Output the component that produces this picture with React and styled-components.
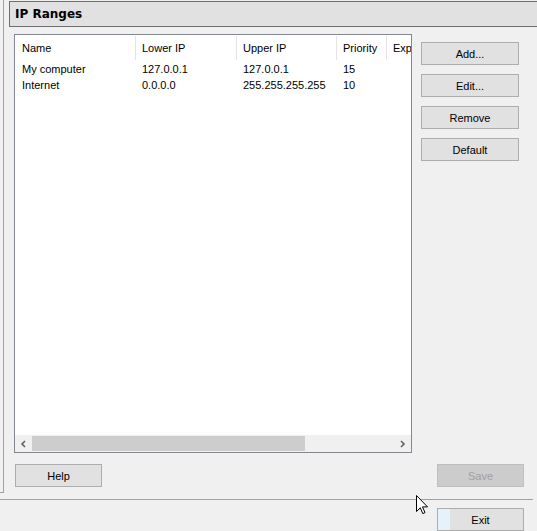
import styled, { createGlobalStyle } from "styled-components";

const GlobalStyle = createGlobalStyle`
  html, body {
    margin: 0;
    padding: 0;
    background: #f0f0f0;
  }
  body {
    font-family: "Liberation Sans", Arial, sans-serif;
    font-size: 11px;
    color: #000;
  }
`;

const Window = styled.div`
  position: relative;
  width: 537px;
  height: 531px;
  overflow: hidden;
  background: #f0f0f0;
  display: flex;
  flex-direction: column;
`;

const Main = styled.div`
  display: flex;
  height: 501px;
`;

const SidePanel = styled.div`
  flex: none;
  width: 3px;
  height: 492px;
  border-right: 1px solid #a0a0a0;
  border-bottom: 1px solid #a0a0a0;
`;

const Content = styled.div`
  flex: 1;
  padding: 1px 0 0 5px;
`;

const GroupHeader = styled.div`
  width: 522px;
  height: 24px;
  border: 1px solid #6e6e6e;
  background: #e1e1e1;
  padding-left: 5px;
  font-family: "DejaVu Sans", Verdana, sans-serif;
  font-weight: bold;
  font-size: 12px;
  line-height: 24px;
`;

const Body = styled.div`
  padding: 7px 0 0 5px;
`;

const Row = styled.div`
  display: flex;
  gap: 9px;
`;

const ListView = styled.div`
  width: 396px;
  height: 417px;
  border: 1px solid #828790;
  background: #fff;
  display: flex;
  flex-direction: column;
  overflow: hidden;
`;

const Columns = "121px 101px 100px 50px 1fr";

const HeaderRow = styled.div`
  display: grid;
  grid-template-columns: ${Columns};
  height: 25px;
  margin-bottom: 1px;
`;

const HeaderCell = styled.div`
  display: flex;
  align-items: center;
  padding-left: ${(p) => (p.$first ? 7 : 6)}px;
  margin: 1px 0 0;
  white-space: nowrap;
  overflow: hidden;
  border-right: ${(p) => (p.$last ? "none" : "1px solid #e5e5e5")};
`;

const DataRow = styled.div`
  display: grid;
  grid-template-columns: ${Columns};
  height: 16px;
  line-height: 16px;
`;

const Cell = styled.div`
  padding-left: ${(p) => (p.$first ? 7 : 6)}px;
  white-space: nowrap;
  overflow: hidden;
`;

const Spacer = styled.div`
  flex: 1;
`;

const ScrollBar = styled.div`
  display: flex;
  height: 17px;
  background: #f0f0f0;
`;

const ScrollArrow = styled.div`
  flex: none;
  width: 17px;
  display: flex;
  align-items: center;
  justify-content: center;
`;

const Track = styled.div`
  flex: 1;
  padding: 1px 0;
`;

const Thumb = styled.div`
  width: 273px;
  height: 15px;
  background: #cdcdcd;
`;

const ButtonColumn = styled.div`
  display: flex;
  flex-direction: column;
  gap: 9px;
  padding-top: 8px;
`;

const Button = styled.button`
  position: relative;
  box-sizing: border-box;
  width: ${(p) => p.$w || 98}px;
  height: 23px;
  margin: 0;
  padding: 0;
  border: 1px solid ${(p) => (p.$disabled ? "#bfbfbf" : "#adadad")};
  background: ${(p) => (p.$disabled ? "#cccccc" : "#e1e1e1")};
  color: ${(p) => (p.$disabled ? "#a0a0a0" : "#000")};
  font-family: "Liberation Sans", Arial, sans-serif;
  font-size: 11px;
  text-align: center;
  overflow: hidden;
`;

const FocusGlow = styled.span`
  position: absolute;
  left: -1px;
  top: -1px;
  width: 12px;
  height: 24px;
  background: #e5f1fb;
  border-left: 1px solid #0078d7;
  border-top: 1px solid #0078d7;
`;

const Label = styled.span`
  position: relative;
`;

const Footer = styled.div`
  display: flex;
  justify-content: space-between;
  width: 509px;
  padding: 11px 0 0 1px;
`;

const Separator = styled.div`
  width: 533px;
  height: 1px;
  background: #a0a0a0;
`;

const BottomBar = styled.div`
  display: flex;
  justify-content: flex-end;
  padding: 8px 13px 0 0;
`;

const Cursor = styled.svg`
  position: absolute;
  left: 416px;
  top: 495px;
`;

const headers = ["Name", "Lower IP", "Upper IP", "Priority", "Expi"];

const ranges = [
  { name: "My computer", lower: "127.0.0.1", upper: "127.0.0.1", priority: "15" },
  { name: "Internet", lower: "0.0.0.0", upper: "255.255.255.255", priority: "10" },
];

function Chevron({ dir }) {
  const d = dir === "left" ? "M5 1 L2 4 L5 7" : "M2 1 L5 4 L2 7";
  return (
    <svg width="7" height="8" viewBox="0 0 7 8">
      <path d={d} fill="none" stroke="#606060" strokeWidth="1.6" />
    </svg>
  );
}

export default function App() {
  return (
    <Window>
      <GlobalStyle />
      <Main>
        <SidePanel />
        <Content>
          <GroupHeader>IP Ranges</GroupHeader>
          <Body>
            <Row>
              <ListView>
                <HeaderRow>
                  {headers.map((h, i) => (
                    <HeaderCell key={h} $first={i === 0} $last={i === headers.length - 1}>
                      {h}
                    </HeaderCell>
                  ))}
                </HeaderRow>
                {ranges.map((r) => (
                  <DataRow key={r.name}>
                    <Cell $first>{r.name}</Cell>
                    <Cell>{r.lower}</Cell>
                    <Cell>{r.upper}</Cell>
                    <Cell>{r.priority}</Cell>
                    <Cell />
                  </DataRow>
                ))}
                <Spacer />
                <ScrollBar>
                  <ScrollArrow>
                    <Chevron dir="left" />
                  </ScrollArrow>
                  <Track>
                    <Thumb />
                  </Track>
                  <ScrollArrow>
                    <Chevron dir="right" />
                  </ScrollArrow>
                </ScrollBar>
              </ListView>
              <ButtonColumn>
                <Button>Add...</Button>
                <Button>Edit...</Button>
                <Button>Remove</Button>
                <Button>Default</Button>
              </ButtonColumn>
            </Row>
            <Footer>
              <Button $w={87}>Help</Button>
              <Button $w={87} $disabled>
                Save
              </Button>
            </Footer>
          </Body>
        </Content>
      </Main>
      <Separator />
      <BottomBar>
        <Button $w={87}>
          <FocusGlow />
          <Label>Exit</Label>
        </Button>
      </BottomBar>
      <Cursor width="13" height="20" viewBox="0 0 13 20">
        <path
          d="M0.5 0.5 L0.5 16.5 L4.3 12.8 L6.8 18.6 L9 17.6 L6.5 11.9 L11.5 11.9 Z"
          fill="#fff"
          stroke="#000"
          strokeWidth="1"
          strokeLinejoin="miter"
        />
      </Cursor>
    </Window>
  );
}
